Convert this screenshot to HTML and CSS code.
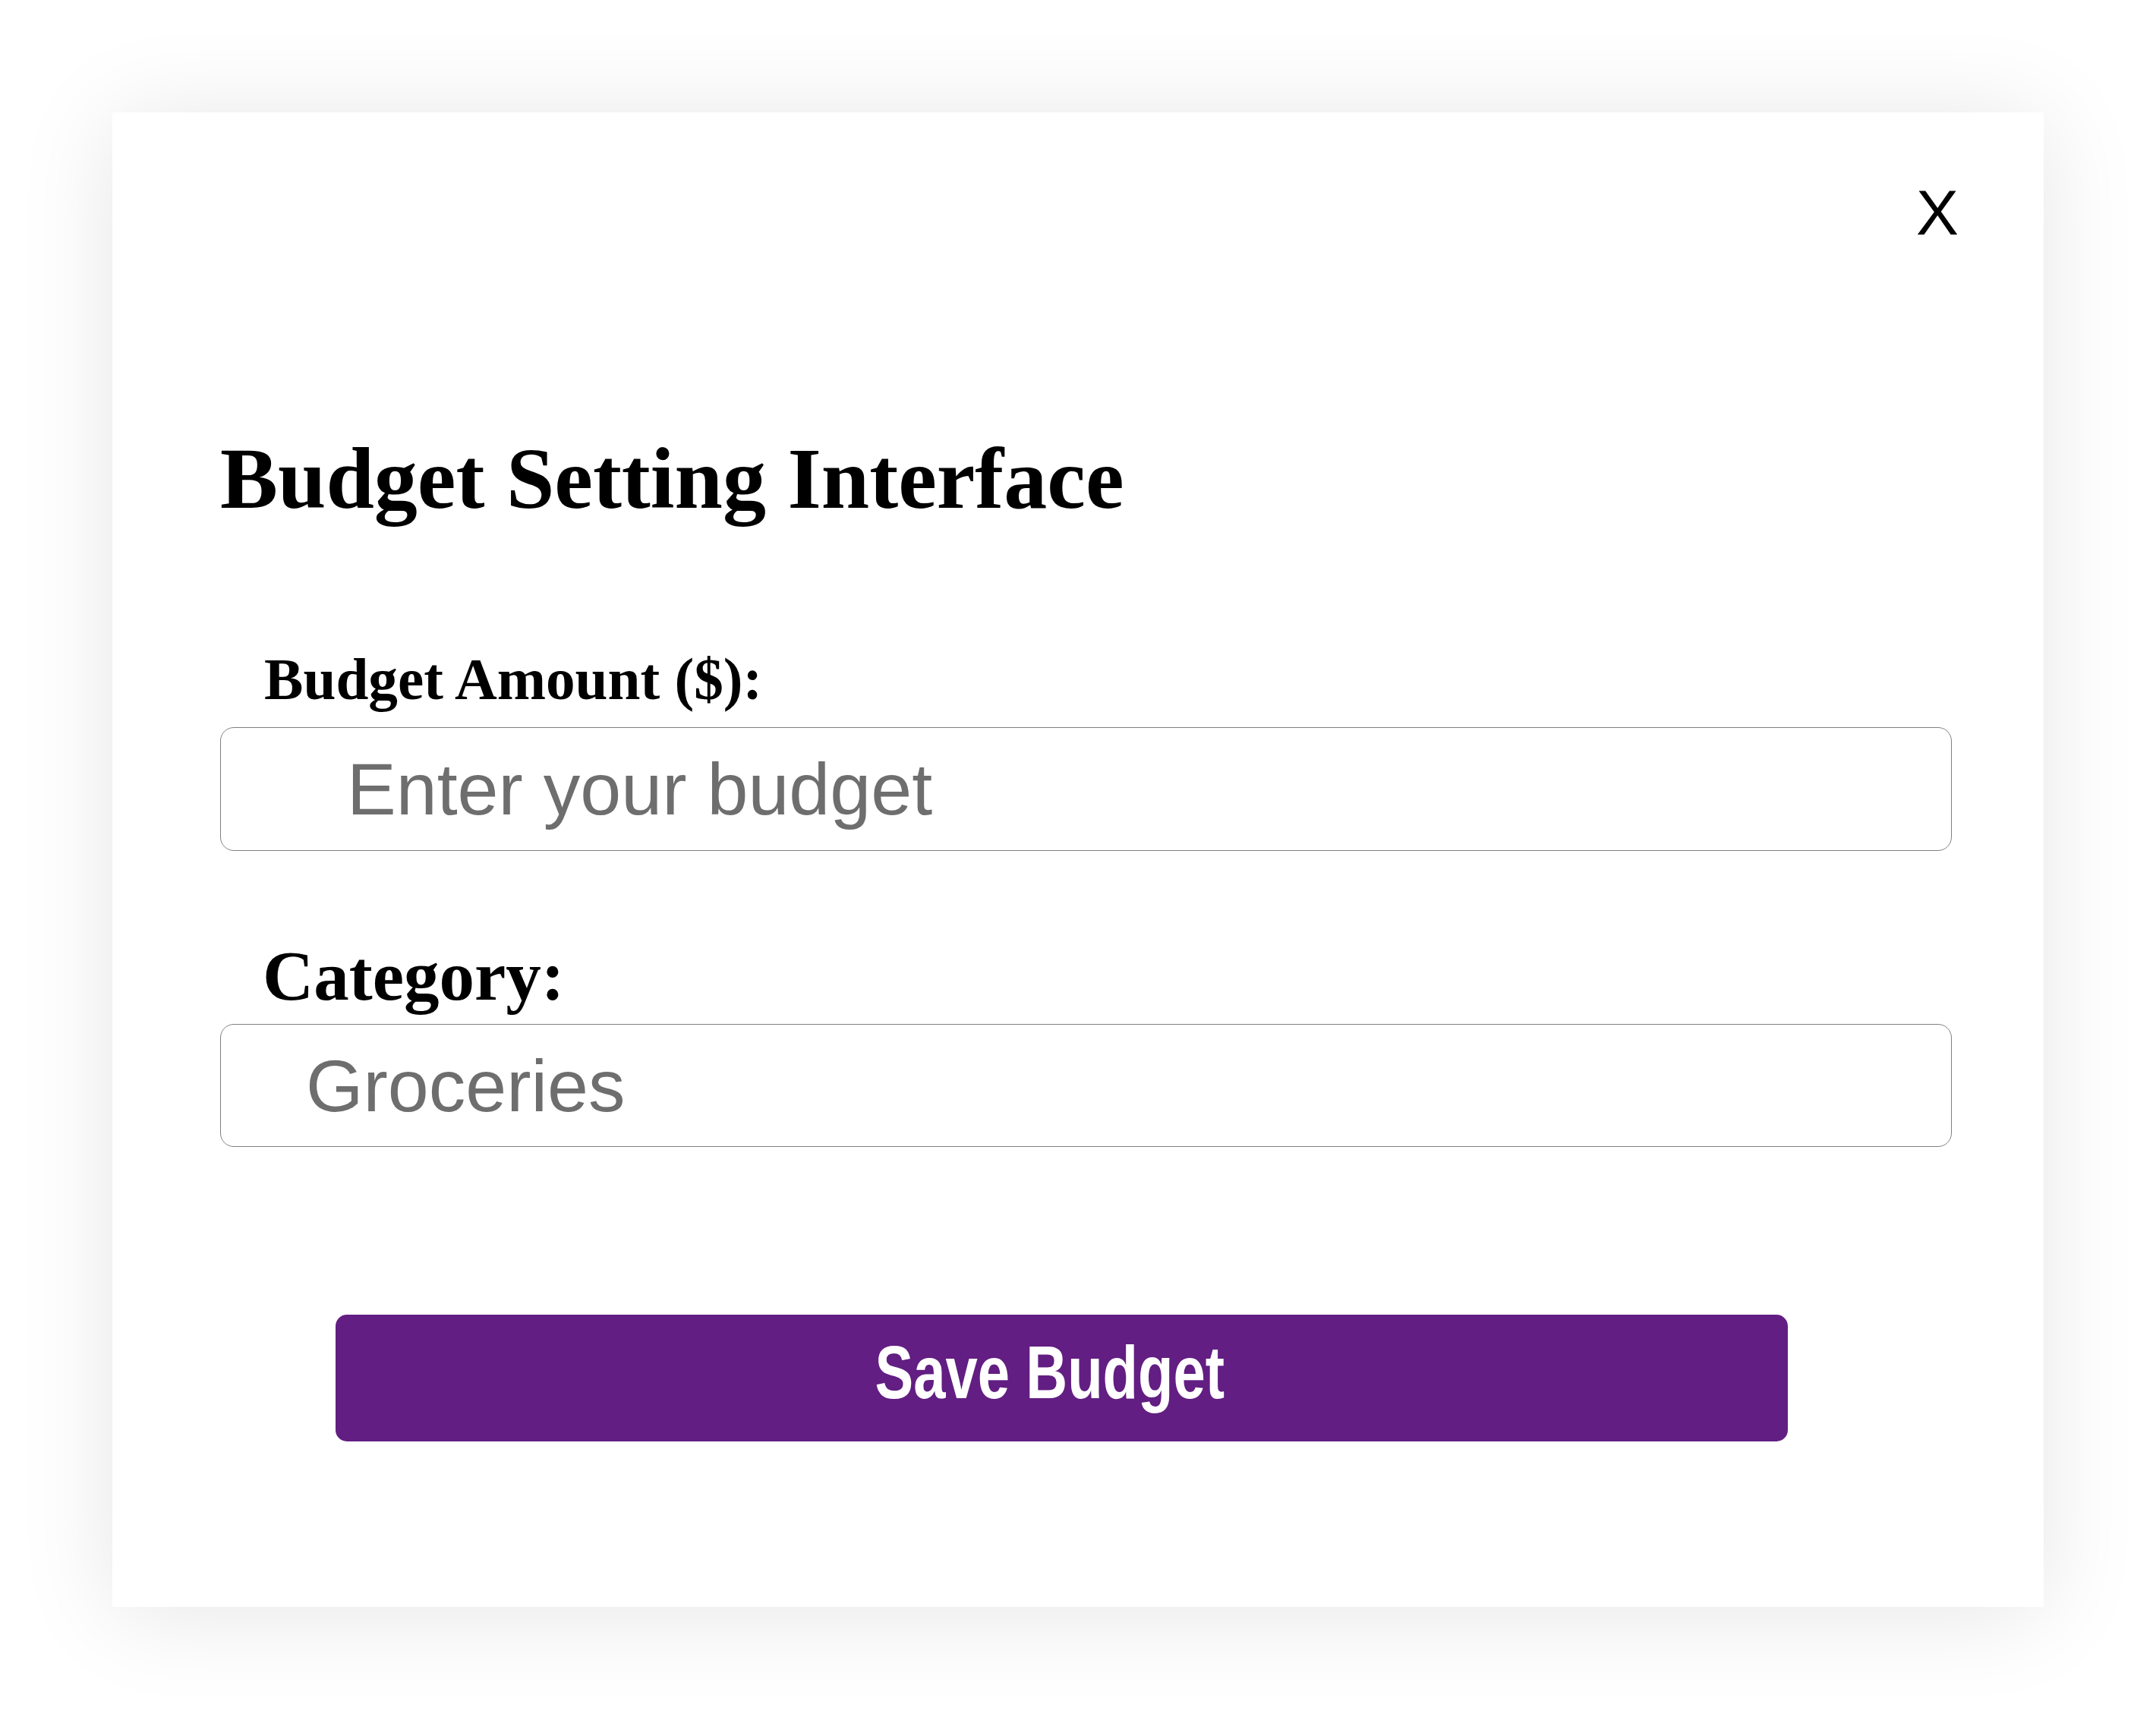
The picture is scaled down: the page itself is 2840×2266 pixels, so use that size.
FILE: index.html
```html
<!DOCTYPE html>
<html lang="en">
<head>
<meta charset="utf-8">
<title>Budget Setting Interface</title>
<link rel="stylesheet" href="styles.css">
</head>
<body>
<div class="modal">
  <div class="modal-header">
    <button class="close" type="button" aria-label="Close">X</button>
  </div>
  <h1 class="title">Budget Setting Interface</h1>
  <form class="form">
    <label class="label label-amount" for="amount">Budget Amount ($):</label>
    <input class="field field-amount" id="amount" type="text" placeholder="Enter your budget">
    <label class="label label-category" for="category">Category:</label>
    <select class="field field-category" id="category">
      <option>Groceries</option>
    </select>
    <button class="save" type="button"><span class="save-text">Save Budget</span></button>
  </form>
</div>
</body>
</html>
```

FILE: styles.css
```css
html, body {
  margin: 0;
  padding: 0;
  background: #ffffff;
}

body {
  font-family: "Liberation Serif", "Times New Roman", serif;
  color: #000;
  padding-top: 1px;
  margin-top: -1px;
}

.modal {
  box-sizing: border-box;
  width: 2544px;
  margin: 148px 0 149px 148px;
  padding: 90px 121px 218px 142px;
  background: #ffffff;
  box-shadow: 0 8px 120px rgba(0, 0, 0, 0.1);
}

.modal-header {
  display: flex;
  justify-content: flex-end;
  margin-right: -9px;
}

.close {
  background: none;
  border: none;
  padding: 0;
  margin: 0;
  font-family: "Liberation Sans", Arial, sans-serif;
  font-size: 84px;
  line-height: 1;
  height: 84px;
  color: #000;
  cursor: pointer;
}

.title {
  margin: 252px 0 0 0;
  font-family: "Liberation Serif", "Times New Roman", serif;
  font-weight: bold;
  font-size: 114px;
  line-height: 1;
}

.form {
  display: flex;
  flex-direction: column;
  align-items: flex-start;
}

.label {
  display: block;
  padding-left: 58px;
  font-family: "Liberation Serif", "Times New Roman", serif;
  font-weight: bold;
  line-height: 1;
}

.label-amount {
  margin-top: 169px;
  font-size: 77.2px;
}

.label-category {
  margin-top: 118px;
  font-size: 93px;
  padding-left: 56px;
}

.field {
  box-sizing: border-box;
  display: block;
  width: 100%;
  margin: 0;
  border: 1px solid #808080;
  border-radius: 18px;
  background: #ffffff;
  font-family: "Liberation Sans", Arial, sans-serif;
  font-size: 97px;
  color: #6e6e6e;
  outline: none;
}

.field-amount {
  margin-top: 24px;
  height: 163px;
  padding: 0 0 0 166px;
}

.field-amount::placeholder {
  color: #6e6e6e;
  opacity: 1;
}

.field-category {
  margin-top: 17px;
  height: 162px;
  padding: 0 0 0 112px;
  -webkit-appearance: none;
  appearance: none;
}

.save {
  box-sizing: border-box;
  margin: 221px 0 0 152px;
  width: 1913px;
  height: 167px;
  padding: 0;
  border: none;
  border-radius: 15px;
  background: #621e82;
  color: #ffffff;
  cursor: pointer;
  display: flex;
  align-items: center;
  justify-content: center;
}

.save-text {
  display: inline-block;
  font-family: "Liberation Sans", Arial, sans-serif;
  font-weight: bold;
  font-size: 99px;
  line-height: 1;
  transform: translate(-16px, -8px) scaleX(0.768);
}
```
